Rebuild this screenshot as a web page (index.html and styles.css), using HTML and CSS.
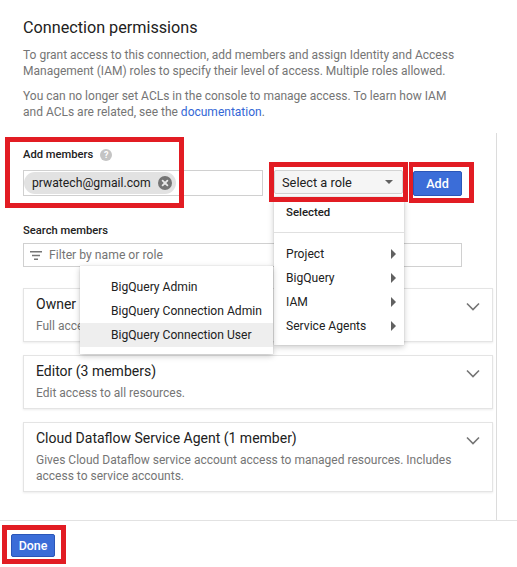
FILE: index.html
```html
<!DOCTYPE html>
<html>
<head>
<meta charset="utf-8">
<link rel="stylesheet" href="styles.css">
</head>
<body>
<div class="page">
  <div class="header">
    <h1 class="title">Connection permissions</h1>
    <p class="desc">To grant access to this connection, add members and assign Identity and Access Management (IAM) roles to specify their level of access. Multiple roles allowed.</p>
    <p class="desc desc2">You can no longer set ACLs in the console to manage access. To learn how IAM and ACLs are related, see the <a class="link">documentation</a>.</p>
  </div>
  <div class="scroll">
    <div class="label-row">
      <span class="label">Add members</span>
      <span class="help">?</span>
    </div>
    <div class="add-row">
      <div class="members-input">
        <span class="chip">prwatech@gmail.com
          <svg class="chip-x" width="14" height="14" viewBox="0 0 14 14"><circle cx="7" cy="7" r="7" fill="#757575"/><path d="M4.6 4.6 L9.4 9.4 M9.4 4.6 L4.6 9.4" stroke="#e8e8e8" stroke-width="1.8" stroke-linecap="round"/></svg>
        </span>
      </div>
      <div class="select">
        <span>Select a role</span>
        <span class="caret"></span>
      </div>
      <button class="btn btn-add">Add</button>
    </div>
    <div class="label search-label">Search members</div>
    <div class="search">
      <svg class="filter" width="12" height="9" viewBox="0 0 12 9"><path d="M0 0.75 H12 M2 4.5 H10 M4 8.25 H8" stroke="#757575" stroke-width="1.4"/></svg>
      <span class="placeholder">Filter by name or role</span>
    </div>
    <div class="cards">
      <div class="card">
        <div class="card-text">
          <div class="card-title">Owner</div>
          <div class="card-sub">Full access to all resources.</div>
        </div>
        <svg class="chev" width="14" height="9" viewBox="0 0 14 9"><path d="M1 1.5 L7 7.5 L13 1.5" fill="none" stroke="#757575" stroke-width="1.6"/></svg>
      </div>
      <div class="card">
        <div class="card-text">
          <div class="card-title">Editor (3 members)</div>
          <div class="card-sub">Edit access to all resources.</div>
        </div>
        <svg class="chev" width="14" height="9" viewBox="0 0 14 9"><path d="M1 1.5 L7 7.5 L13 1.5" fill="none" stroke="#757575" stroke-width="1.6"/></svg>
      </div>
      <div class="card">
        <div class="card-text">
          <div class="card-title">Cloud Dataflow Service Agent (1 member)</div>
          <div class="card-sub">Gives Cloud Dataflow service account access to managed resources. Includes access to service accounts.</div>
        </div>
        <svg class="chev" width="14" height="9" viewBox="0 0 14 9"><path d="M1 1.5 L7 7.5 L13 1.5" fill="none" stroke="#757575" stroke-width="1.6"/></svg>
      </div>
    </div>
  </div>
  <div class="footer">
    <button class="btn btn-done">Done</button>
  </div>

  <div class="menu role-menu">
    <div class="menu-head">Selected</div>
    <div class="menu-sep"></div>
    <div class="menu-item">Project <span class="tri"></span></div>
    <div class="menu-item">BigQuery <span class="tri"></span></div>
    <div class="menu-item">IAM <span class="tri"></span></div>
    <div class="menu-item">Service Agents <span class="tri"></span></div>
  </div>
  <div class="menu sub-menu">
    <div class="sub-item">BigQuery Admin</div>
    <div class="sub-item">BigQuery Connection Admin</div>
    <div class="sub-item active">BigQuery Connection User</div>
  </div>

  <div class="mark mark-members"></div>
  <div class="mark mark-role"></div>
  <div class="mark mark-add"></div>
  <div class="mark mark-done"></div>
</div>
</body>
</html>
```
FILE: styles.css
```css
* { box-sizing: border-box; }
html, body { margin: 0; padding: 0; background: #fff; }
body { font-family: Roboto, "Liberation Sans", Arial, sans-serif; color: #212121; }
.page { position: relative; width: 517px; height: 567px; overflow: hidden; }

.header { padding: 16px 23px 0 23px; height: 133px; }
.title { margin: 0; font-size: 16.2px; font-weight: 400; line-height: 24px; color: #212121; }
.desc { margin: 7px 0 0; font-size: 12px; line-height: 16px; color: #757575; width: 440px; }
.desc2 { margin-top: 9px; }
.link { color: #3367d6; text-decoration: none; }

.scroll { height: 387px; width: 497px; border-right: 1px solid #dcdcdc; padding: 14px 0 0 23px; }
.label-row { display: flex; align-items: center; height: 16px; }
.label { font-size: 11.2px; font-weight: 500; line-height: 16px; color: #212121; }
.help { display: inline-flex; align-items: center; justify-content: center; width: 12px; height: 12px; border-radius: 50%; background: #c4c4c4; color: #fff; font-size: 9px; font-weight: 700; margin-left: 7px; }

.add-row { display: flex; align-items: flex-start; margin-top: 7px; height: 27px; }
.members-input { width: 240px; height: 26px; border: 1px solid #d0d0d0; padding: 1px 0 0 0; }
.chip { display: inline-flex; align-items: center; height: 22px; padding: 0 4px 0 8px; border-radius: 11px; background: #e2e2e2; font-size: 12.2px; color: #212121; }
.chip-x { margin-left: 7px; }

.select { display: flex; align-items: center; justify-content: space-between; width: 129px; height: 24px; margin-left: 11px; padding: 0 9px 0 7px; background: #f5f5f5; border: 1px solid #d3d3d3; border-radius: 2px; font-size: 12.8px; color: #212121; }
.caret { width: 0; height: 0; border-left: 4.5px solid transparent; border-right: 4.5px solid transparent; border-top: 4.5px solid #616161; }

.btn { font-family: Roboto, "Liberation Sans", Arial, sans-serif; font-weight: 500; color: #fff; background: #3b6dd8; border: 1px solid #2a56b8; border-radius: 2px; cursor: pointer; padding: 0; }
.btn-add { width: 49px; height: 25px; margin-left: 10px; margin-top: 1px; font-size: 12.6px; }

.search-label { margin-top: 26px; }
.search { display: flex; align-items: center; width: 439px; height: 24px; margin-top: 4px; border: 1px solid #d0d0d0; padding-left: 6px; }
.filter { margin-right: 7px; }
.placeholder { font-size: 12.2px; color: #757575; }

.cards { display: flex; flex-direction: column; gap: 13px; margin-top: 21px; width: 470px; }
.card { display: flex; justify-content: space-between; align-items: flex-start; border: 1px solid #e4e4e4; box-shadow: 0 1px 2px rgba(0,0,0,0.08); padding: 5px 12px 7px 12px; background: #fff; }
.card-title { font-size: 14px; line-height: 20px; color: #212121; }
.card-sub { font-size: 12px; line-height: 16px; color: #757575; margin-top: 4px; width: 420px; }
.chev { margin-top: 8px; flex: none; }

.footer { border-top: 1px solid #e2e2e2; padding: 13px 0 0 11px; }
.btn-done { width: 44px; height: 23px; font-size: 12.4px; }

.menu { position: absolute; background: #fff; box-shadow: 0 2px 6px rgba(0,0,0,0.22), 0 0 1px rgba(0,0,0,0.2); }
.role-menu { left: 274px; top: 197px; width: 130px; height: 148px; padding-top: 5px; }
.menu-head { padding-left: 12px; font-size: 11.4px; font-weight: 500; line-height: 20px; }
.menu-sep { height: 1px; background: #e0e0e0; margin: 10px 0 9px; }
.menu-item { display: flex; justify-content: space-between; align-items: center; height: 24px; padding: 0 8px 0 12px; font-size: 12.1px; color: #212121; }
.tri { width: 0; height: 0; border-top: 5px solid transparent; border-bottom: 5px solid transparent; border-left: 5px solid #616161; }

.sub-menu { left: 80px; top: 266px; width: 193px; height: 88px; padding-top: 9px; }
.sub-item { height: 24px; line-height: 24px; padding-left: 31px; font-size: 12.1px; color: #212121; }
.sub-item.active { background: #eeeeee; }

.mark { position: absolute; border: 5px solid #e21c23; }
.mark-members { left: 5px; top: 137px; width: 179px; height: 71px; }
.mark-role { left: 269px; top: 162px; width: 139px; height: 40px; }
.mark-add { left: 409px; top: 162px; width: 65px; height: 41px; border-left-width: 4px; }
.mark-done { left: 2px; top: 525px; width: 64px; height: 39px; }
```
